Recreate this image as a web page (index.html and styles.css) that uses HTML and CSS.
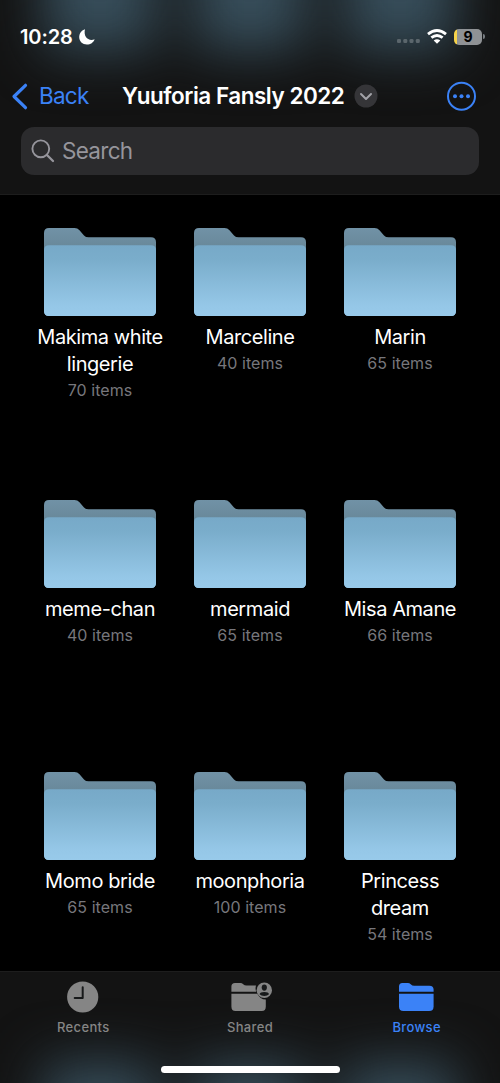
FILE: index.html
```html
<!DOCTYPE html>
<html lang="en">
<head>
<meta charset="utf-8">
<meta name="viewport" content="width=device-width, initial-scale=1">
<title>Files</title>
<link rel="stylesheet" href="styles.css">
</head>
<body>
<svg class="defs" width="0" height="0" aria-hidden="true">
  <defs>
    <linearGradient id="front" x1="0" y1="0" x2="0" y2="1"><stop offset="0" stop-color="#77a9c8"/><stop offset=".2" stop-color="#7aadcb"/><stop offset=".85" stop-color="#95c7e7"/><stop offset="1" stop-color="#98caea"/></linearGradient>
    <linearGradient id="back" x1="0" y1="0" x2="0" y2="1"><stop offset="0" stop-color="#7192a6"/><stop offset=".2" stop-color="#69899b"/><stop offset="1" stop-color="#7eabc5"/></linearGradient>
    <symbol id="folder" viewBox="0 0 112 88">
      <path fill="url(#back)" d="M0 5Q0 0 5 0H30.500Q33.500 0 35.500 2.200L40 7.400Q41.800 9.300 44.500 9.300H107Q112 9.300 112 14.300V83Q112 88 107 88H5Q0 88 0 83Z"/>
      <path fill="url(#front)" d="M0 22Q0 17.300 5 17.300H107Q112 17.300 112 22V83Q112 88 107 88H5Q0 88 0 83Z"/>
    </symbol>
  </defs>
</svg>
<div class="screen">
  <header class="header">
    <div class="glow"><i></i><i></i><i></i></div>
    <div class="status">
      <span class="time">10:28</span>
      <svg class="moon" width="16" height="16" viewBox="0 0 16 16"><path fill="#fff" d="M6 .3C3 1.200 .2 4.200 .2 8.100C.2 12.500 3.500 15.600 7.900 15.600C11.500 15.600 14.600 13.400 15.600 10.200C10 12.700 4 8.200 6 .3Z"/></svg>
      <svg class="signal" width="24" height="6" viewBox="0 0 24 6" fill="#5b666c"><rect x="0" y="1" width="4" height="4" rx="1.300"/><rect x="6.300" y="1" width="4" height="4" rx="1.300"/><rect x="12.500" y="1" width="4" height="4" rx="1.300"/><rect x="18.800" y="1" width="4" height="4" rx="1.300"/></svg>
      <svg class="wifi" width="20" height="15" viewBox="0 0 20 15"><g fill="none" stroke="#fff" stroke-width="2.900"><path d="M1 5.100Q10-1.900 19 5.100"/><path d="M4.400 8.700Q10 4.300 15.600 8.700"/></g><path fill="#fff" d="M6.700 11.400Q10 8.900 13.300 11.400L10 14.700Z"/></svg>
      <span class="battery"><span class="level">9</span></span>
      <span class="battery-tip"></span>
    </div>
    <nav class="nav">
      <svg width="17" height="27" viewBox="0 0 17 27"><path d="M14.500 2.300L3 13.500L14.500 24.700" fill="none" stroke="#3b82f7" stroke-width="3.200" stroke-linecap="round" stroke-linejoin="round"/></svg>
      <span class="back">Back</span>
      <h1 class="title">Yuuforia Fansly 2022</h1>
      <svg class="chevron" width="24" height="24" viewBox="0 0 24 24"><circle cx="12" cy="12" r="11.500" fill="#353538"/><path d="M7 10L12 15L17 10" fill="none" stroke="#a3a3a9" stroke-width="2" stroke-linecap="round" stroke-linejoin="round"/></svg>
      <svg class="more" width="30" height="30" viewBox="0 0 30 30"><circle cx="14.500" cy="15.200" r="13.500" fill="none" stroke="#3b82f7" stroke-width="2"/><g fill="#3b82f7"><circle cx="8" cy="15.200" r="2"/><circle cx="14.500" cy="15.200" r="2"/><circle cx="21" cy="15.200" r="2"/></g></svg>
    </nav>
    <div class="search">
      <svg width="24" height="24" viewBox="0 0 24 24"><g fill="none" stroke="#96959c" stroke-linecap="round"><circle cx="9.800" cy="9.800" r="8.400" stroke-width="1.900"/><path d="M16.200 16.200L22 22" stroke-width="2.300"/></g></svg>
      <span class="placeholder">Search</span>
    </div>
  </header>
  <main class="grid">
    <div class="item"><svg class="icon"><use href="#folder"/></svg><div class="name">Makima white<br>lingerie</div><div class="count">70 items</div></div>
    <div class="item"><svg class="icon"><use href="#folder"/></svg><div class="name">Marceline</div><div class="count">40 items</div></div>
    <div class="item"><svg class="icon"><use href="#folder"/></svg><div class="name">Marin</div><div class="count">65 items</div></div>
    <div class="item"><svg class="icon"><use href="#folder"/></svg><div class="name">meme-chan</div><div class="count">40 items</div></div>
    <div class="item"><svg class="icon"><use href="#folder"/></svg><div class="name">mermaid</div><div class="count">65 items</div></div>
    <div class="item"><svg class="icon"><use href="#folder"/></svg><div class="name">Misa Amane</div><div class="count">66 items</div></div>
    <div class="item"><svg class="icon"><use href="#folder"/></svg><div class="name">Momo bride</div><div class="count">65 items</div></div>
    <div class="item"><svg class="icon"><use href="#folder"/></svg><div class="name">moonphoria</div><div class="count">100 items</div></div>
    <div class="item"><svg class="icon"><use href="#folder"/></svg><div class="name">Princess<br>dream</div><div class="count">54 items</div></div>
  </main>
  <footer class="footer">
    <div class="glow"><i></i><i></i><i></i></div>
    <div class="tabs">
      <div class="tab"><svg width="44" height="34" viewBox="0 0 44 34"><circle cx="21.700" cy="17" r="15.600" fill="#858585"/><path d="M21.700 7.200V18H13.700" fill="none" stroke="#17191a" stroke-width="2" stroke-linecap="round" stroke-linejoin="round"/></svg><span>Recents</span></div>
      <div class="tab"><svg width="44" height="34" viewBox="0 0 44 34"><g fill="#858585"><path d="M3.400 11.700V6.500Q3.400 3 7 3H12.500Q14 3 15.200 4.200Q16.600 5.600 18.500 5.600H28Q27 9 28.300 11.700Z"/><path d="M3.400 13.700H29.300Q32 19.200 37.800 19.600V26.500Q37.800 31 33.800 31H7.500Q3.400 31 3.400 26.500Z"/><circle cx="36.300" cy="10.200" r="7.700"/></g><g fill="#17191a"><ellipse cx="36.300" cy="7.600" rx="2.600" ry="3.100"/><path d="M31.600 14.300Q32 11.900 36.300 11.900T41 14.300Q39.500 16.100 36.300 16.100T31.600 14.300Z"/></g></svg><span>Shared</span></div>
      <div class="tab active"><svg width="44" height="34" viewBox="0 0 44 34" fill="#3b82f7"><path d="M4 11.700V6.500Q4 3 7.400 3H12.900Q14.500 3 15.700 4.200Q17.200 5.700 19.200 5.700H34.400Q38.600 5.700 38.600 9.600V11.700Z"/><path d="M4 13.700H38.600V26.500Q38.600 31 34.200 31H8.400Q4 31 4 26.500Z"/></svg><span>Browse</span></div>
    </div>
    <div class="home"></div>
  </footer>
</div>
</body>
</html>
```
FILE: styles.css
```css
* { box-sizing: border-box; }
body { margin: 0; background: #000; color: #fff; font-family: Inter, "Noto Sans", sans-serif; }
.defs { position: absolute; }
svg { display: block; flex: none; }
.screen { width: 500px; height: 1083px; display: flex; flex-direction: column; overflow: hidden; }
.header, .footer { position: relative; isolation: isolate; overflow: hidden; flex: none; background: #131313; }
.header { height: 195px; border-bottom: 1px solid #1d1d1d; }
/* Folders scrolled beneath the translucent bars */
.glow { position: absolute; z-index: -1; left: 0; width: 500px; height: 150px; padding: 0 44px; display: flex; gap: 38px; filter: blur(27px); }
.glow i { width: 112px; background: #374e5b; }
.header .glow { top: -99px; }
.footer .glow { top: 91px; }
.status { height: 73px; padding: 0 15px 0 20px; display: flex; align-items: center; }
.time { font-size: 20px; font-weight: 600; letter-spacing: -.1px; width: 59px; white-space: nowrap; }
.signal { margin: 9px 0 0 auto; }
.wifi { margin-left: 6px; }
.battery { margin-left: 7px; width: 28px; height: 16px; border-radius: 5px; background: linear-gradient(90deg, #f6d34a 3px, #8f9295 3px); display: flex; align-items: center; justify-content: center; }
.level { color: #000; font-size: 14px; font-weight: 700; line-height: 16px; }
.battery-tip { width: 2px; height: 5px; margin-left: 1px; border-radius: 0 2px 2px 0; background: #777d81; }
.nav { height: 46px; padding: 0 23px 0 11px; display: flex; align-items: center; }
.back { margin-left: 11px; width: 83px; padding-bottom: 2px; color: #3b82f7; font-size: 22.500px; letter-spacing: -.75px; }
.title { margin: 0; width: 232px; white-space: nowrap; font-size: 22.500px; font-weight: 600; letter-spacing: -.48px; line-height: 26px; padding-bottom: 1px; }
.more { margin-left: auto; }
.search { margin: 8px 21px 0; height: 48px; border-radius: 13px; background: #2b2b2d; padding-left: 10px; display: flex; align-items: center; gap: 7px; color: #96959c; font-size: 22.500px; letter-spacing: -.7px; }
.placeholder { padding-bottom: 2px; }
.grid { flex: 1; min-height: 0; padding: 33px 25px 0; display: grid; grid-template-columns: repeat(3, 150px); grid-auto-rows: 272px; overflow: hidden; }
.item { display: flex; flex-direction: column; align-items: center; text-align: center; }
.icon { width: 112px; height: 88px; }
.name { margin-top: 8px; font-size: 20px; line-height: 27px; letter-spacing: -.42px; white-space: nowrap; }
.count { line-height: 25px; font-size: 16px; letter-spacing: .05px; color: #77777c; }
.footer { height: 112px; border-top: 1px solid #1d1d1d; display: flex; flex-direction: column; align-items: center; }
.tabs { width: 500px; height: 94px; display: grid; grid-template-columns: repeat(3, 1fr); }
.tab { padding-top: 8px; display: flex; flex-direction: column; align-items: center; color: #858585; font-size: 13px; font-weight: 500; letter-spacing: .35px; line-height: 26px; }
.active { color: #3b82f7; }
.home { width: 179px; height: 7px; border-radius: 4px; background: #fff; }
```
